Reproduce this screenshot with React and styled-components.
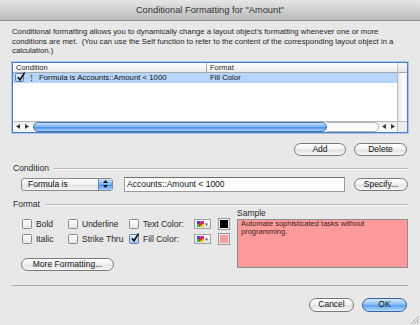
import styled, { createGlobalStyle } from "styled-components";

const GlobalStyle = createGlobalStyle`
  body {
    margin: 0;
    background: #e8e8e8;
  }
`;

function Triangle({ dir }) {
  return (
    <svg width="4" height="5" viewBox="0 0 4 5">
      {dir === "left" ? (
        <polygon points="4,0 4,5 0,2.5" fill="#3a3a3a" />
      ) : (
        <polygon points="0,0 0,5 4,2.5" fill="#3a3a3a" />
      )}
    </svg>
  );
}

function CheckMark() {
  return (
    <svg width="10" height="10" viewBox="0 0 10 10" style={{ position: "absolute", left: 0, top: -2 }}>
      <path d="M1.8 5.2 L4 7.8 L8.6 0.6" stroke="#111" strokeWidth="1.6" fill="none" />
    </svg>
  );
}

function ColorIcon() {
  return (
    <svg width="7" height="6" viewBox="0 0 7 6">
      <rect x="0" y="0" width="3.5" height="3" fill="#2b4cf0" />
      <rect x="3.5" y="0" width="3.5" height="3" fill="#e8208a" />
      <rect x="0" y="3" width="3.5" height="3" fill="#27c23a" />
      <rect x="3.5" y="3" width="3.5" height="3" fill="#f3d21c" />
      <rect x="2" y="1.5" width="3" height="3" fill="#e02a2a" />
    </svg>
  );
}

function Stepper() {
  return (
    <svg width="5" height="8" viewBox="0 0 5 8">
      <polygon points="0,3 5,3 2.5,0" fill="#111" />
      <polygon points="0,5 5,5 2.5,8" fill="#111" />
    </svg>
  );
}

function Check({ checked, label }) {
  return (
    <CheckItem>
      <Box $checked={checked}>{checked && <CheckMark />}</Box>
      {label}
    </CheckItem>
  );
}

export default function App() {
  return (
    <>
      <GlobalStyle />
      <Window>
        <TitleBar>Conditional Formatting for "Amount"</TitleBar>
        <Body>
          <Intro>
            Conditional formatting allows you to dynamically change a layout object's formatting whenever one or more
            conditions are met.&nbsp; (You can use the Self function to refer to the content of the corresponding layout
            object in a calculation.)
          </Intro>

          <Table>
            <HeaderRow>
              <HeaderCell>Condition</HeaderCell>
              <HeaderCell $divider>Format</HeaderCell>
            </HeaderRow>
            <HeaderCorner />
            <Rows>
              <Row $selected>
                <RowCell>
                  <Box $checked $small>
                    <CheckMark />
                  </Box>
                  <Grip>⋮</Grip>
                  Formula is Accounts::Amount &lt; 1000
                </RowCell>
                <RowCell $second>Fill Color</RowCell>
              </Row>
            </Rows>
            <VScroll />
            <HScroll>
              <ArrowPair>
                <Triangle dir="left" />
                <Triangle dir="right" />
              </ArrowPair>
              <Thumb />
              <Track />
              <ArrowPair>
                <Triangle dir="left" />
                <Triangle dir="right" />
              </ArrowPair>
            </HScroll>
            <Corner />
          </Table>

          <ButtonRow>
            <PillButton $w={52}>Add</PillButton>
            <PillButton $w={53}>Delete</PillButton>
          </ButtonRow>

          <SectionHeader>
            <SectionLabel>Condition</SectionLabel>
            <Rule />
          </SectionHeader>

          <ConditionRow>
            <Popup>
              <PopupText>Formula is</PopupText>
              <PopupArrows>
                <Stepper />
              </PopupArrows>
            </Popup>
            <TextField>Accounts::Amount &lt; 1000</TextField>
            <PillButton $w={54}>Specify...</PillButton>
          </ConditionRow>

          <SectionHeader>
            <SectionLabel>Format</SectionLabel>
            <Rule />
          </SectionHeader>

          <FormatBody>
            <FormatLeft>
              <CheckGrid>
                <Check label="Bold" />
                <Check label="Underline" />
                <ColorCell>
                  <Check label="Text Color:" />
                  <ColorButton>
                    <ColorIcon />
                    <Caret>▾</Caret>
                  </ColorButton>
                  <Swatch $color="#000" />
                </ColorCell>
                <Check label="Italic" />
                <Check label="Strike Thru" />
                <ColorCell>
                  <Check checked label="Fill Color:" />
                  <ColorButton>
                    <ColorIcon />
                    <Caret>▾</Caret>
                  </ColorButton>
                  <Swatch $color="#ff9c9c" />
                </ColorCell>
              </CheckGrid>
              <PillButton $w={93}>More Formatting...</PillButton>
            </FormatLeft>
            <SampleColumn>
              <SampleLabel>Sample</SampleLabel>
              <SampleBox>Automate sophisticated tasks without programming.</SampleBox>
            </SampleColumn>
          </FormatBody>

          <Separator />

          <Footer>
            <PillButton $w={45} $h={14}>Cancel</PillButton>
            <PillButton $w={45} $h={14} $primary>
              OK
            </PillButton>
          </Footer>
        </Body>
        <ResizeGrip width="10" height="10" viewBox="0 0 10 10">
          <path d="M10 2 L2 10 M10 5 L5 10 M10 8 L8 10" stroke="#9a9a9a" strokeWidth="0.8" />
        </ResizeGrip>
      </Window>
    </>
  );
}

const Window = styled.div`
  position: relative;
  width: 420px;
  height: 325px;
  background: #e8e8e8;
  display: flex;
  flex-direction: column;
  overflow: hidden;
  font-family: "Liberation Sans", Arial, sans-serif;
  color: #1e1e1e;
`;

const TitleBar = styled.div`
  flex: none;
  height: 20px;
  background: linear-gradient(#e6e6e6, #bababa);
  border-bottom: 1px solid #8c8c8c;
  display: flex;
  align-items: center;
  justify-content: center;
  font-size: 9.3px;
  color: #333;
`;

const Body = styled.div`
  display: flex;
  flex-direction: column;
  padding: 6px 12px 0 12px;
`;

const Intro = styled.p`
  margin: 0;
  font-size: 7.75px;
  line-height: 9.5px;
  color: #1e1e1e;
`;

const Table = styled.div`
  margin-top: 6px;
  height: 69px;
  border: 1px solid #4f7fc4;
  box-shadow: 0 0 0 1px #a5c4ec;
  background: #fff;
  display: grid;
  grid-template-columns: 1fr 10px;
  grid-template-rows: 10px 1fr 11px;
`;

const HeaderRow = styled.div`
  display: grid;
  grid-template-columns: 193px 1fr;
  background: linear-gradient(#ffffff, #ececec);
  border-bottom: 1px solid #a9a9a9;
`;

const HeaderCell = styled.div`
  font-size: 7.5px;
  line-height: 10px;
  padding-left: 3px;
  color: #2a2a2a;
  border-left: ${(p) => (p.$divider ? "1px solid #a9a9a9" : "none")};
`;

const HeaderCorner = styled.div`
  background: linear-gradient(#f6f6f6, #e4e4e4);
  border-bottom: 1px solid #a9a9a9;
  border-left: 1px solid #c4c4c4;
`;

const Rows = styled.div`
  display: flex;
  flex-direction: column;
`;

const Row = styled.div`
  display: grid;
  grid-template-columns: 193px 1fr;
  height: 10px;
  background: ${(p) => (p.$selected ? "#b5d5fd" : "transparent")};
`;

const RowCell = styled.div`
  display: flex;
  align-items: center;
  font-size: 7.8px;
  line-height: 10px;
  padding-left: ${(p) => (p.$second ? "4px" : "2px")};
  color: #111;
  white-space: nowrap;
`;

const Grip = styled.span`
  font-size: 7px;
  font-weight: bold;
  margin: 0 4px 0 4px;
  color: #333;
`;

const VScroll = styled.div`
  background: linear-gradient(90deg, #e6e6e6, #ffffff 60%, #eeeeee);
  border-left: 1px solid #b9b9b9;
`;

const HScroll = styled.div`
  display: flex;
  align-items: center;
  background: linear-gradient(#e9e9e9, #ffffff 60%, #f1f1f1);
  border-top: 1px solid #b9b9b9;
`;

const ArrowPair = styled.div`
  display: flex;
  align-items: center;
  justify-content: space-around;
  width: 18px;
  height: 100%;
  flex: none;
`;

const Thumb = styled.div`
  flex: none;
  width: 292px;
  height: 8px;
  margin-left: 2px;
  border: 1px solid #3f70b5;
  border-radius: 5px;
  background: linear-gradient(#c8e0f8, #7cb3ee 45%, #4b93e6 55%, #a8d0f6);
`;

const Track = styled.div`
  flex: 1;
  height: 8px;
  border: 1px solid #b5b5b5;
  border-left: none;
  border-radius: 0 5px 5px 0;
  background: linear-gradient(#f6f6f6, #ffffff);
`;

const Corner = styled.div`
  background: #ececec;
  border-top: 1px solid #b9b9b9;
  border-left: 1px solid #b9b9b9;
`;

const ButtonRow = styled.div`
  display: flex;
  justify-content: flex-end;
  gap: 8px;
  margin-top: 10px;
  padding-right: 1px;
`;

const PillButton = styled.button`
  flex: none;
  width: ${(p) => p.$w}px;
  height: ${(p) => p.$h || 13}px;
  padding: 0;
  border: 1px solid ${(p) => (p.$primary ? "#3c5f9f" : "#7a7a7a")};
  border-radius: 8px;
  background: ${(p) =>
    p.$primary
      ? "linear-gradient(#d3e7fc, #8cc0f4 45%, #5aa2ec 55%, #b6dcff)"
      : "linear-gradient(#ffffff, #f3f3f3 45%, #e2e2e2 55%, #f7f7f7)"};
  font-family: "Liberation Sans", Arial, sans-serif;
  font-size: 8.5px;
  line-height: 11px;
  color: #111;
  text-align: center;
`;

const SectionHeader = styled.div`
  display: flex;
  align-items: center;
  gap: 5px;
  height: 10px;
  margin-top: 7px;
`;

const SectionLabel = styled.span`
  font-size: 8.5px;
  color: #2a2a2a;
  padding-left: 1px;
`;

const Rule = styled.div`
  flex: 1;
  height: 1px;
  background: #b9b9b9;
  border-bottom: 1px solid #f6f6f6;
  margin-top: 2px;
`;

const ConditionRow = styled.div`
  display: flex;
  align-items: center;
  margin-top: 4px;
  padding-left: 9px;
  height: 15px;
`;

const Popup = styled.div`
  flex: none;
  display: flex;
  width: 92px;
  height: 13px;
  box-sizing: border-box;
  border: 1px solid #8a8a8a;
  border-radius: 3px;
  overflow: hidden;
  background: linear-gradient(#ffffff, #f2f2f2 45%, #e2e2e2 55%, #f3f3f3);
`;

const PopupText = styled.span`
  flex: 1;
  font-size: 8.5px;
  line-height: 11px;
  padding-left: 6px;
  color: #111;
`;

const PopupArrows = styled.span`
  flex: none;
  width: 13px;
  display: flex;
  align-items: center;
  justify-content: center;
  border-left: 1px solid #5f86c0;
  background: linear-gradient(#cbe2fb, #82b8f0 45%, #4f98e8 55%, #acd4fb);
`;

const TextField = styled.div`
  flex: none;
  width: 221px;
  height: 15px;
  box-sizing: border-box;
  margin: 0 9px 0 11px;
  border: 1px solid #9a9a9a;
  border-top-color: #6f6f6f;
  background: #fff;
  font-size: 8.5px;
  line-height: 13px;
  padding-left: 2px;
  color: #111;
`;

const FormatBody = styled.div`
  display: flex;
  align-items: flex-start;
`;

const FormatLeft = styled.div`
  width: 216px;
  padding-left: 9px;
  padding-top: 8px;
  display: flex;
  flex-direction: column;
  align-items: flex-start;
  gap: 11px;
`;

const CheckGrid = styled.div`
  display: grid;
  grid-template-columns: 46px 61px auto;
  grid-auto-rows: 15px;
  padding-left: 1px;
`;

const CheckItem = styled.div`
  display: flex;
  align-items: center;
  gap: 4px;
  font-size: 8.5px;
  color: #1e1e1e;
  white-space: nowrap;
`;

const Box = styled.span`
  position: relative;
  flex: none;
  width: ${(p) => (p.$small ? 7 : 8)}px;
  height: ${(p) => (p.$small ? 7 : 8)}px;
  border: 1px solid ${(p) => (p.$checked ? "#5d7eaf" : "#8a8a8a")};
  border-radius: 1.5px;
  background: ${(p) =>
    p.$checked ? "linear-gradient(#e2eefc, #a9cbf2)" : "linear-gradient(#ffffff, #e6e6e6)"};
`;

const ColorCell = styled.div`
  display: grid;
  grid-template-columns: 58px 17px 12px;
  column-gap: 7px;
  align-items: center;
`;

const ColorButton = styled.div`
  display: flex;
  align-items: center;
  justify-content: center;
  gap: 1px;
  width: 17px;
  height: 10px;
  box-sizing: border-box;
  border: 1px solid #a2a2a2;
  background: linear-gradient(#ffffff, #e4e4e4);
`;

const Caret = styled.span`
  font-family: "DejaVu Sans", sans-serif;
  font-size: 5px;
  color: #444;
`;

const Swatch = styled.div`
  width: 12px;
  height: 12px;
  box-sizing: border-box;
  border: 1px solid #9a9a9a;
  background: ${(p) => p.$color};
  box-shadow: inset 0 0 0 1px #e8e8e8;
`;

const SampleColumn = styled.div`
  display: flex;
  flex-direction: column;
  width: 171px;
`;

const SampleLabel = styled.div`
  font-size: 8.5px;
  line-height: 8px;
  margin-bottom: 2px;
  color: #2a2a2a;
`;

const SampleBox = styled.div`
  height: 49px;
  box-sizing: border-box;
  border: 1px solid #8e8e8e;
  background: #ff9a9a;
  padding: 0 3px;
  font-size: 7.5px;
  line-height: 8px;
  color: #3a1f1f;
`;

const Separator = styled.div`
  height: 1px;
  background: #acacac;
  margin-top: 14px;
`;

const Footer = styled.div`
  display: flex;
  justify-content: flex-end;
  gap: 8px;
  margin-top: 12px;
  padding-right: 1px;
`;

const ResizeGrip = styled.svg`
  position: absolute;
  right: 1px;
  bottom: 1px;
`;
